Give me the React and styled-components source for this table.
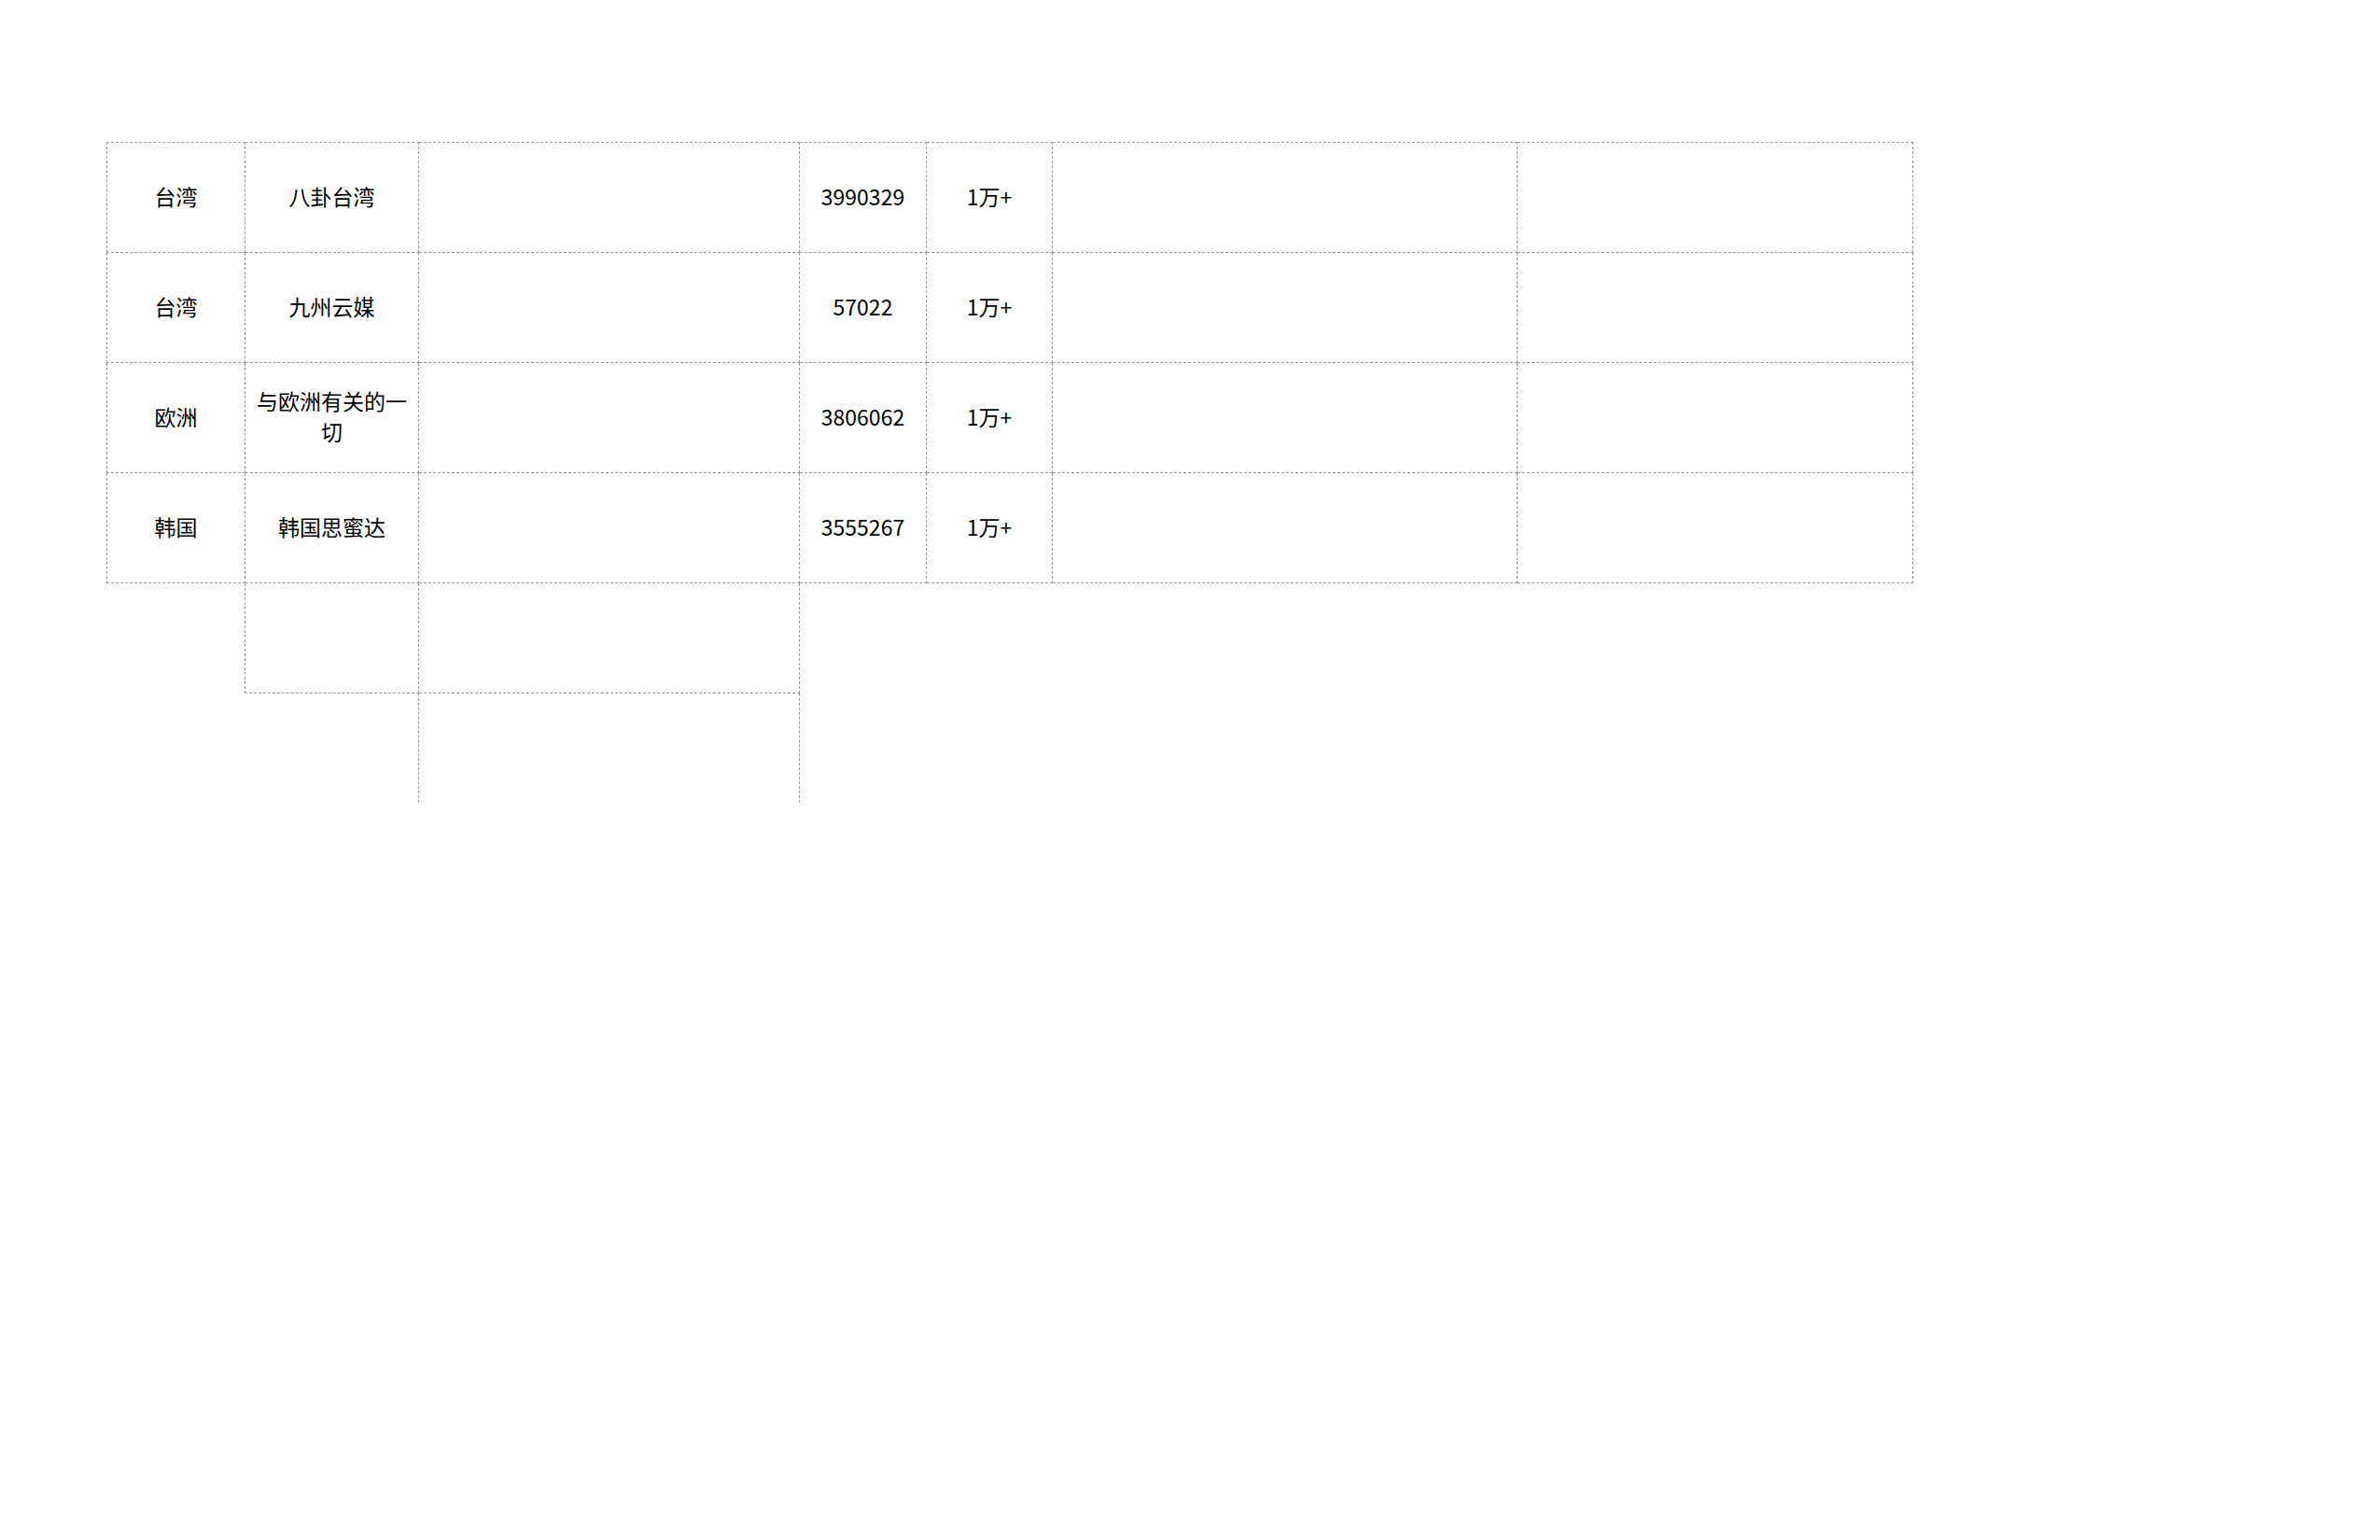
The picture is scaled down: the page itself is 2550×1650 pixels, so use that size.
import React from "react"
import styled, { createGlobalStyle } from "styled-components"

const GlobalStyle = createGlobalStyle`
  body {
    margin: 0;
    background: #fff;
    font-family: "Noto Sans CJK SC", "Noto Sans", sans-serif;
  }
`

const Page = styled.div`
  padding: 152px 0 0 114px;
  min-height: 1650px;
  box-sizing: border-box;
`

const Sheet = styled.table`
  border-collapse: collapse;
  table-layout: fixed;
  width: 1935px;
`

const Line = "1px dashed #999"

const Cell = styled.td`
  height: 114px;
  padding: 0 10px 3px;
  text-align: center;
  vertical-align: middle;
  font-size: 23px;
  line-height: 33px;
  color: #000;
  word-break: break-all;
  border-top: ${({ $top }) => ($top ? Line : "none")};
  border-bottom: ${({ $bottom }) => ($bottom ? Line : "none")};
  border-left: ${({ $left }) => ($left ? Line : "none")};
  border-right: ${({ $right }) => ($right ? Line : "none")};
`

const widths = [148, 186, 408, 136, 135, 498, 424]

const rows = [
  ["台湾", "八卦台湾", "", "3990329", "1万+", "", ""],
  ["台湾", "九州云媒", "", "57022", "1万+", "", ""],
  ["欧洲", "与欧洲有关的一切", "", "3806062", "1万+", "", ""],
  ["韩国", "韩国思蜜达", "", "3555267", "1万+", "", ""],
]

const App = () => (
  <Page>
    <GlobalStyle />
    <Sheet>
      <colgroup>
        {widths.map((w, i) => (
          <col key={i} style={{ width: w }} />
        ))}
      </colgroup>
      <tbody>
        {rows.map((row, r) => (
          <tr key={r}>
            {row.map((text, c) => (
              <Cell key={c} $top $bottom $left $right>
                {text}
              </Cell>
            ))}
          </tr>
        ))}
        <tr>
          <Cell />
          <Cell $left $bottom $right />
          <Cell $left $bottom $right />
          <Cell />
          <Cell />
          <Cell />
          <Cell />
        </tr>
        <tr>
          <Cell />
          <Cell />
          <Cell $left $right />
          <Cell />
          <Cell />
          <Cell />
          <Cell />
        </tr>
      </tbody>
    </Sheet>
  </Page>
)

export default App
